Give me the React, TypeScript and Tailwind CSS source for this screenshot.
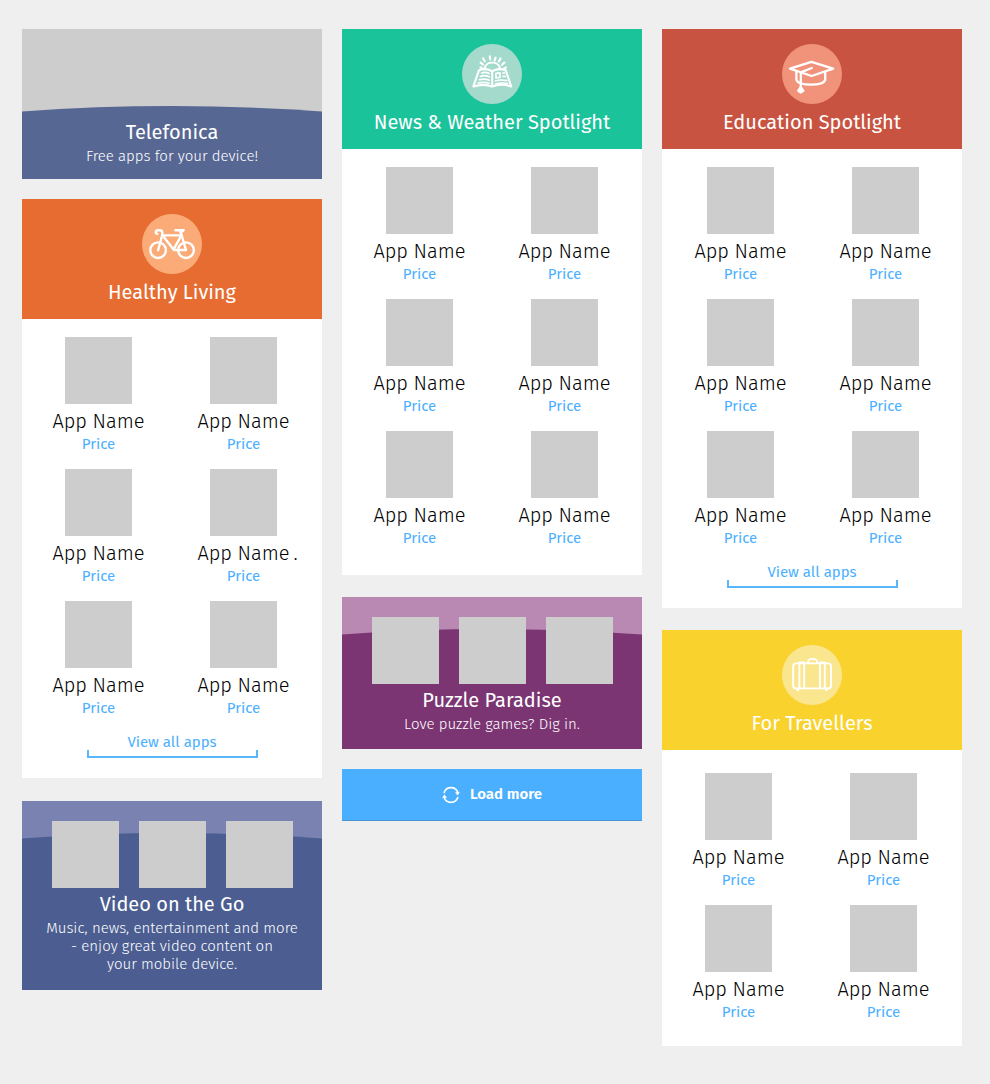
import type { ReactNode } from "react";

type App = { name: string; price: string; mark?: string };

const makeApps = (count: number, marked = -1): App[] =>
  Array.from({ length: count }, (_, i) => ({
    name: "App Name",
    price: "Price",
    mark: i === marked ? "." : undefined,
  }));

function Tile() {
  return <div className="size-[67px] shrink-0 bg-[#cdcdcd]" />;
}

function BikeIcon() {
  return (
    <svg viewBox="0 0 60 60" className="size-15" fill="none" stroke="white" strokeWidth="2.4" strokeLinecap="round" strokeLinejoin="round" aria-hidden="true">
      <circle cx="16.1" cy="36.2" r="7.8" />
      <circle cx="44" cy="36.2" r="7.8" />
      <path d="M16.1 36.2 L20.3 21 V18.6 C20.3 16.8 19.4 16.2 17.8 16.2 H16 C13.2 16.2 13.2 19.6 15.4 19.9" />
      <path d="M20.3 21.4 H39.4 L31.6 35.4 L20.8 21.8" />
      <path d="M32 36 H44 L38.4 17" />
      <path d="M33.4 16.2 H41.6 C41.2 17.4 40 17.8 38.4 18" strokeWidth="2.6" />
    </svg>
  );
}

function BookIcon() {
  return (
    <svg viewBox="0 0 60 60" className="size-15" fill="none" stroke="white" strokeWidth="2.1" strokeLinecap="round" strokeLinejoin="round" aria-hidden="true">
      <path d="M22.6 24.8 C23.6 16.4 37 16.4 38 24.8" />
      <path d="M27.7 12.2 L28.2 15.4 M33.6 13.6 L32.6 16.4 M21.2 14.4 L22.7 17.2 M38.6 14.4 L36.8 17.4 M18.6 18.6 L21 20.6 M42.4 18.6 L40 20.8 M18.4 23.4 L20 24.2 M44 23.6 L42.2 24.2" />
      <path d="M30.2 27.4 C26.4 24.6 21 24.8 17 26.2 L11.4 42.4 C18 40.4 25 40.4 30.2 42.6 C35.4 40.4 42.6 40.4 49.2 42.4 L43.6 26.2 C39.4 24.8 34 24.6 30.2 27.4 Z M30.2 27.4 V42.4" />
      <path strokeWidth="1.7" d="M19.6 29 C22 28.2 25 28.4 27.2 29.4 M18.4 32.4 C21.4 31.4 24.6 31.6 27.2 32.8 M17.2 35.8 C20.6 34.8 24.4 35 27.2 36.2 M16.2 39 C20 38 24 38.2 27.2 39.2" />
      <path strokeWidth="1.7" d="M34 29.4 L38 28.8 V33.4 L34 34 Z M40.8 29 H42.4 M41 32.4 H43.2 M33.4 37 C37 35.8 41 35.8 44.6 36.6 M33.4 40 C37 38.8 41.8 38.8 45.6 39.6" />
    </svg>
  );
}

function CapIcon() {
  return (
    <svg viewBox="0 0 60 60" className="size-15" fill="none" stroke="white" strokeWidth="2.3" strokeLinecap="round" strokeLinejoin="round" aria-hidden="true">
      <path d="M29.4 17.8 L51.2 24.7 L29.6 32 L8 24.7 Z" />
      <path d="M14.4 27.6 V36 C17 42.2 41 42.2 43.2 36 V28.2" />
      <path d="M29.8 24 L18.8 28.4 V43" />
      <path d="M18.8 43 L16.2 46.8 L18.8 48.4 L21.4 46.8 Z" fill="white" />
    </svg>
  );
}

function SuitcaseIcon() {
  return (
    <svg viewBox="0 0 60 60" className="size-15" fill="none" stroke="white" strokeWidth="1.9" strokeLinejoin="round" aria-hidden="true">
      <rect x="11.2" y="18.4" width="37.8" height="25" rx="3" />
      <path d="M17.4 43 V17.4 H22.2 V43 M38 43 V17.4 H42.8 V43" />
      <path d="M26.2 18.4 V16.6 C26.2 13 35 13 35 16.6 V18.4" />
      <path d="M15.4 45 H16.4 M44 45 H45" strokeLinecap="round" />
    </svg>
  );
}

function RefreshIcon() {
  return (
    <svg viewBox="0 0 18 18" className="size-[18px]" fill="none" stroke="white" strokeWidth="1.6" strokeLinecap="round" aria-hidden="true">
      <path d="M2.2 6.4 A7.2 7.2 0 0 1 15.8 6.6 M15.8 11.6 A7.2 7.2 0 0 1 2.2 11.4" />
      <path d="M13 6.4 L17.8 5.8 L15.8 9.6 Z M5 11.6 L0.2 12.2 L2.2 8.4 Z" fill="white" stroke="none" />
    </svg>
  );
}

function AppCell({ app }: { app: App }) {
  return (
    <li className="flex flex-col items-center">
      <Tile />
      <span className="relative mt-[3px] text-[20px] leading-7 font-light text-black">
        {app.name}
        {app.mark && <span className="absolute left-full pl-1">{app.mark}</span>}
      </span>
      <span className="text-[15px] leading-[18px] text-[#4bafff]">{app.price}</span>
    </li>
  );
}

type CollectionProps = {
  title: string;
  icon: ReactNode;
  headerClass: string;
  circleClass: string;
  bodyClass: string;
  gridClass: string;
  apps: App[];
  viewAll?: boolean;
};

function Collection({ title, icon, headerClass, circleClass, bodyClass, gridClass, apps, viewAll }: CollectionProps) {
  return (
    <section className="bg-white">
      <header className={`flex flex-col items-center pt-[15px] pb-[13px] ${headerClass}`}>
        <div className={`size-15 rounded-full ${circleClass}`}>{icon}</div>
        <h2 className="mt-1 text-[20px] leading-7 text-white">{title}</h2>
      </header>
      <div className={`flex flex-col items-center ${bodyClass}`}>
        <ul className={`grid w-full grid-cols-2 gap-y-4 ${gridClass}`}>
          {apps.map((app, i) => (
            <AppCell key={i} app={app} />
          ))}
        </ul>
        {viewAll && (
          <a href="#all" className="mt-4 flex w-[171px] flex-col text-center text-[15px] leading-[18px] text-[#4bafff]">
            View all apps
            <span className="-mt-px h-2 border-x-2 border-b-2 border-[#5ab5fb]" />
          </a>
        )}
      </div>
    </section>
  );
}

type FeatureProps = {
  title: string;
  text: string[];
  cardClass: string;
  waveClass: string;
  tiles?: boolean;
};

function Feature({ title, text, cardClass, waveClass, tiles }: FeatureProps) {
  return (
    <section className={`relative text-center text-white ${cardClass}`}>
      <div className={`absolute inset-x-0 bottom-0 flex flex-col ${waveClass}`}>
        <svg viewBox="0 0 300 6" preserveAspectRatio="none" className="block h-1.5 w-full" fill="currentColor" aria-hidden="true">
          <path d="M0 6 V5.4 Q150 -5.2 300 5.4 V6 Z" />
        </svg>
        <div className="flex-1 bg-current" />
      </div>
      <div className="relative">
        {tiles && (
          <div className="mb-0.5 flex justify-center gap-5">
            <Tile />
            <Tile />
            <Tile />
          </div>
        )}
        <h2 className="text-[20px] leading-7">{title}</h2>
        <p className="mt-px text-[15px] leading-[18px] font-light">
          {text.map((line) => (
            <span key={line} className="block">
              {line}
            </span>
          ))}
        </p>
      </div>
    </section>
  );
}

export default function App() {
  return (
    <main className="min-h-screen bg-[#efefef] pt-[29px] pr-7 pb-[38px] pl-[22px] font-['Fira_Sans','Noto_Sans',sans-serif]">
      <div className="grid grid-cols-3 items-start gap-5">
        <div className="flex flex-col">
          <Feature
            title="Telefonica"
            text={["Free apps for your device!"]}
            cardClass="bg-[#cdcdcd] pt-[89px] pb-[14px]"
            waveClass="top-[77px] text-[#576793]"
          />
          <div className="mt-5">
            <Collection
              title="Healthy Living"
              icon={<BikeIcon />}
              headerClass="bg-[#e66c32]"
              circleClass="bg-[#fbab77]"
              bodyClass="pt-[18px] pb-5"
              gridClass="pr-1.5 pl-1"
              apps={makeApps(6, 3)}
              viewAll
            />
          </div>
          <div className="mt-[23px]">
            <Feature
              title="Video on the Go"
              text={["Music, news, entertainment and more", "- enjoy great video content on", "your mobile device."]}
              cardClass="bg-[#7982b0] pt-5 pb-[17px]"
              waveClass="top-8 text-[#4b5d91]"
              tiles
            />
          </div>
        </div>

        <div className="flex flex-col">
          <Collection
            title="News & Weather Spotlight"
            icon={<BookIcon />}
            headerClass="bg-[#1bc39b]"
            circleClass="bg-[#a4dacb]"
            bodyClass="pt-[18px] pb-7"
            gridClass="px-[5px]"
            apps={makeApps(6)}
          />
          <div className="mt-[22px]">
            <Feature
              title="Puzzle Paradise"
              text={["Love puzzle games? Dig in."]}
              cardClass="bg-[#b988b3] pt-5 pb-4"
              waveClass="top-8 text-[#7b3573]"
              tiles
            />
          </div>
          <button
            type="button"
            className="mt-5 flex h-[52px] items-center justify-center gap-2.5 border-b border-[#4796d8] bg-[#4bafff] text-[15px] font-semibold text-white"
          >
            <RefreshIcon />
            Load more
          </button>
        </div>

        <div className="flex flex-col">
          <Collection
            title="Education Spotlight"
            icon={<CapIcon />}
            headerClass="bg-[#c95341]"
            circleClass="bg-[#f0937a]"
            bodyClass="pt-[18px] pb-5"
            gridClass="pr-1 pl-1.5"
            apps={makeApps(6)}
            viewAll
          />
          <div className="mt-[22px]">
            <Collection
              title="For Travellers"
              icon={<SuitcaseIcon />}
              headerClass="bg-[#f9d22e]"
              circleClass="bg-[#fae68e]"
              bodyClass="pt-[23px] pb-[25px]"
              gridClass="pr-1.5 pl-1"
              apps={makeApps(4)}
            />
          </div>
        </div>
      </div>
    </main>
  );
}
